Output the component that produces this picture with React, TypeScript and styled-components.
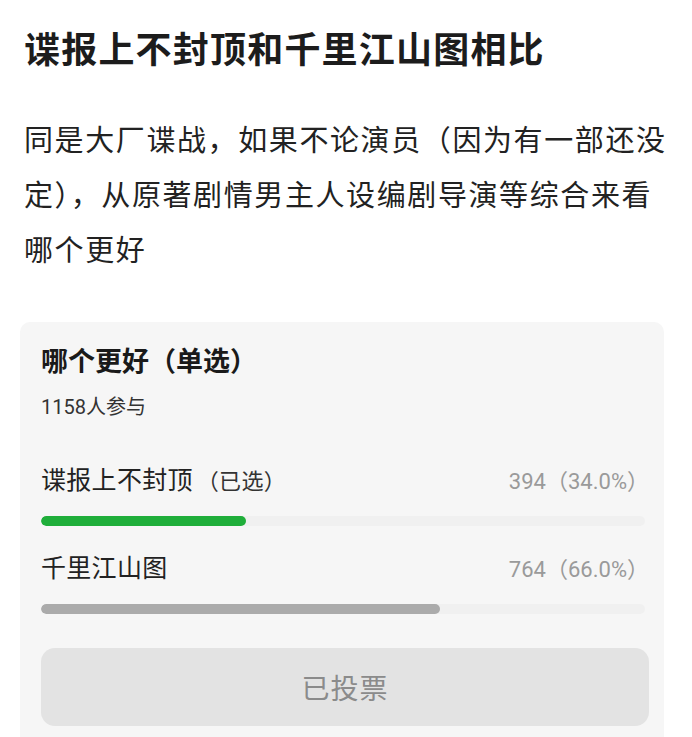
import React from "react";
import styled, { createGlobalStyle } from "styled-components";

const Global = createGlobalStyle`
  html, body {
    margin: 0;
    padding: 0;
    background: #ffffff;
  }
  body {
    font-family: "Noto Sans CJK SC", "Noto Sans", sans-serif;
    color: #1a1a1a;
  }
`;

const Page = styled.div`
  width: 692px;
  height: 737px;
  overflow: hidden;
  box-sizing: border-box;
  padding: 20px 0 0 0;
`;

const Title = styled.h1`
  margin: 0 0 0 24px;
  font-size: 36px;
  line-height: 54px;
  font-weight: 700;
  color: #1c1c1c;
  letter-spacing: 1.2px;
`;

const Body = styled.p`
  margin: 37px 20px 0 24px;
  font-size: 29px;
  line-height: 55px;
  font-weight: 400;
  color: #222;
  letter-spacing: 1.6px;
`;

const Card = styled.section`
  margin: 46px 28px 0 20px;
  background: #f6f6f6;
  border-radius: 10px;
  padding: 19px 19px 20px 21px;
  box-sizing: border-box;
  height: 430px;
`;

const CardTitle = styled.h2`
  margin: 0;
  font-size: 27px;
  line-height: 38px;
  font-weight: 700;
  color: #1a1a1a;
`;

const Count = styled.div`
  margin-top: 16px;
  font-family: Roboto, "Noto Sans CJK SC", sans-serif;
  font-size: 20px;
  line-height: 24px;
  color: #333;
`;

const Options = styled.div`
  margin-top: 44px;
  display: flex;
  flex-direction: column;
  gap: 25px;
`;

const Option = styled.div`
  display: flex;
  flex-direction: column;
  gap: 19px;
`;

const OptionHead = styled.div`
  display: flex;
  justify-content: space-between;
  align-items: baseline;
`;

const Label = styled.span`
  font-size: 25px;
  line-height: 30px;
  color: #222;
  letter-spacing: 0.3px;
`;

const Tag = styled.span`
  font-size: 22px;
  color: #333;
  margin-left: 4px;
`;

const Stat = styled.span`
  font-family: Roboto, "Noto Sans CJK SC", sans-serif;
  font-size: 22px;
  line-height: 30px;
  color: #9a9a9a;
  margin-right: -4px;
`;

const Track = styled.div`
  height: 10px;
  border-radius: 5px;
  background: #f0f0f0;
  overflow: hidden;
`;

const Fill = styled.div<{ $mine: boolean }>`
  height: 100%;
  border-radius: 5px;
  background: ${(p) => (p.$mine ? "#1fae3a" : "#ababab")};
`;

const VoteButton = styled.button`
  margin-top: 34px;
  width: 608px;
  height: 78px;
  border: none;
  border-radius: 14px;
  background: #e3e3e3;
  color: #8b8b8b;
  font-family: "Noto Sans CJK SC", "Noto Sans", sans-serif;
  font-size: 28px;
  letter-spacing: 1px;
`;

const options = [
  { name: "谍报上不封顶", votes: 394, pct: 34.0, mine: true },
  { name: "千里江山图", votes: 764, pct: 66.0, mine: false },
];

export default function App() {
  return (
    <Page>
      <Global />
      <Title>谍报上不封顶和千里江山图相比</Title>
      <Body>
        同是大厂谍战，如果不论演员（因为有一部还没定），从原著剧情男主人设编剧导演等综合来看哪个更好
      </Body>
      <Card>
        <CardTitle>哪个更好（单选）</CardTitle>
        <Count>1158人参与</Count>
        <Options>
          {options.map((o) => (
            <Option key={o.name}>
              <OptionHead>
                <Label>
                  {o.name}
                  {o.mine && <Tag>（已选）</Tag>}
                </Label>
                <Stat>
                  {o.votes}（{o.pct.toFixed(1)}%）
                </Stat>
              </OptionHead>
              <Track>
                <Fill $mine={o.mine} style={{ width: `${o.pct}%` }} />
              </Track>
            </Option>
          ))}
        </Options>
        <VoteButton>已投票</VoteButton>
      </Card>
    </Page>
  );
}
